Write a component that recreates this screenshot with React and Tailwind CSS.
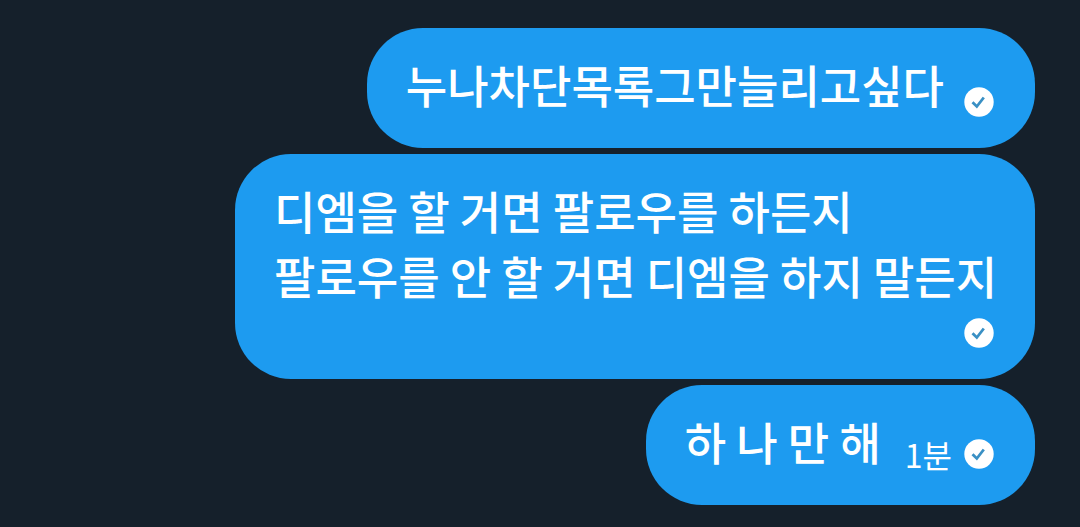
import React from 'react';

const messages = [
    { id: 1, lines: ['누나차단목록그만늘리고싶다'] },
    { id: 2, lines: ['디엠을 할 거면 팔로우를 하든지', '팔로우를 안 할 거면 디엠을 하지 말든지'], wrapStatus: true },
    { id: 3, lines: ['하 나 만 해'], time: '1분' }
];

const SentIcon = () => (
    <svg viewBox="0 0 30 30" className="w-[30px] h-[30px] shrink-0" role="img" aria-label="전송됨">
        <circle cx="15" cy="15" r="14.7" fill="#fff" />
        <path d="M8.5 15.3l4.3 4.2 7-9" fill="none" stroke="#3a90c4" strokeWidth="2.8" />
    </svg>
);

const Message = ({ message }) => {
    let statusClass = 'ml-5';
    if (message.wrapStatus) statusClass = 'mt-[10px]';
    if (message.time) statusClass = 'ml-6 mb-[5px]';

    return (
        <li className={`max-w-[800px] rounded-[56px] bg-[#1d9bf0] pl-[39px] pr-[41px] pt-6 pb-[31px] flex ${message.wrapStatus ? 'flex-col' : 'items-end'}`}>
            <p className="text-[45px] leading-[65px] whitespace-nowrap">
                {message.lines.map((line) => (
                    <span key={line} className="block">{line}</span>
                ))}
            </p>
            <div className={`flex items-center justify-end gap-3 ${statusClass}`}>
                {message.time && <time className="text-[32px] leading-[30px] font-normal">{message.time}</time>}
                <SentIcon />
            </div>
        </li>
    );
};

const App = () => (
    <main className="min-h-screen bg-[#15202b] text-white font-medium font-['Noto_Sans_CJK_KR',sans-serif]">
        <ul className="flex flex-col items-end gap-1.5 pt-7 pb-[22px] pr-[45px]">
            {messages.map((message) => (
                <Message key={message.id} message={message} />
            ))}
        </ul>
    </main>
);

export default App;
